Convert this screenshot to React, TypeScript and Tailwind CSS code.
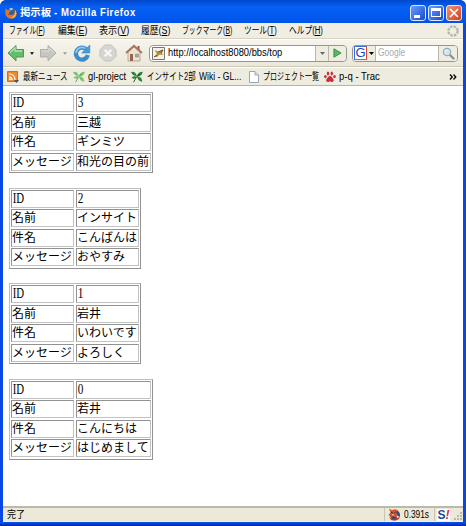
import { useLayoutEffect, useRef, type ReactNode } from 'react';

const ui = "font-['Liberation_Sans','Noto_Sans_CJK_JP',sans-serif]";

/* Text condensed or stretched to the width of its box. */
function Fit({ className, children }: { className: string; children: ReactNode }) {
  const box = useRef<HTMLSpanElement>(null);
  const inner = useRef<HTMLSpanElement>(null);
  useLayoutEffect(() => {
    const fit = () => {
      if (box.current && inner.current) {
        inner.current.style.transform = `scaleX(${box.current.clientWidth / inner.current.offsetWidth})`;
      }
    };
    fit();
    document.fonts.ready.then(fit);
  }, []);
  return (
    <span ref={box} className={`block shrink-0 whitespace-nowrap ${className}`}>
      <span ref={inner} className="inline-block origin-left">{children}</span>
    </span>
  );
}

function Fox({ className }: { className: string }) {
  return (
    <svg viewBox="0 0 12 12" className={`shrink-0 ${className}`}>
      <circle cx="6.2" cy="5.7" r="5" fill="#2b5fa8" />
      <path d="M4 1.8Q6 .3 8 1.3L7.4 3 5.5 3.6Z" fill="#a8d0ef" />
      <path d="M.4 1.2 2.1 3 4.4 3.2 5.5 4.7 4 5.4Q4 8 6.6 8 9.5 7.8 9.7 4.5L9 2.2Q12 4 11.8 7 11 11.5 6.5 11.8 1.6 11.8.4 7Z" fill="#e8781b" />
      <path d="M10.4 3.5Q12.2 6.5 9.7 9.7 7.8 11.2 5.5 10.5 9.5 10 10.2 6.4Z" fill="#ffd04a" />
      <path d="M1 5 3 7 5 6.4 3.9 8.3Z" fill="#b83e10" />
    </svg>
  );
}

/* Status bar badge: a red-brown fox over a blue disc. */
function StatusFox() {
  return (
    <svg viewBox="0 0 13 13" className="h-[13px] w-[13px] shrink-0">
      <circle cx="7" cy="7" r="5" fill="#2c4c86" />
      <path d="M1 .5 4 2.2 6.5 1.2 10 2 8.3 4.4 9.8 7.3 8 9.5 5 8 3.2 9.5.5 7 2.6 4.5Z" fill="#d3542d" />
      <path d="M1 8.5Q4 12 8 10.6L11.5 7.5 11 11 7 12.8 3 12Z" fill="#b63a22" />
      <path d="m3.2 4.2 1.6.8M7.5 4 6.4 5" stroke="#2b1712" />
      <path d="m4 6.3 2 .2-1 1.6Z" fill="#fff1da" />
      <circle cx="9.7" cy="8.8" r="1.1" fill="#eef2f6" />
    </svg>
  );
}

function Arrow({ green }: { green?: boolean }) {
  return green ? (
    <svg viewBox="0 0 18 18" className="h-[18px] w-[18px] shrink-0">
      <path d="M1 9 9 1.5V5.5H16.5V13H9v3.8Z" fill="#65bd6c" stroke="#469b54" strokeWidth="1" />
      <path d="M3 8.6 8 4V7H15" fill="none" stroke="#b4e3b0" strokeWidth="1.3" />
    </svg>
  ) : (
    <svg viewBox="0 0 18 18" className="h-[18px] w-[18px] shrink-0">
      <path d="M17 9 9 1.5V5.5H1.5V13H9v3.8Z" fill="#c6c6c3" stroke="#aeaeac" strokeWidth="1" />
      <path d="M2.5 7H10V4l5 4.8" fill="none" stroke="#dededb" />
    </svg>
  );
}

function Down({ className }: { className: string }) {
  return (
    <svg viewBox="0 0 5 3" className={`h-[3px] shrink-0 ${className}`}>
      <path d="M0 0h5L2.5 3Z" fill="currentColor" />
    </svg>
  );
}

function Leaf({ dark, className }: { dark?: boolean; className: string }) {
  return (
    <svg viewBox="0 0 12 12" className={`h-3 w-3 shrink-0 ${className}`}>
      <g fill={dark ? '#28843a' : '#77c66b'}>
        <path d="M0 1Q4-.5 6 5 2 5.5 0 1Z" />
        <path d="M6 5.5Q6.5.8 11.8.8 11 5.5 6 5.5Z" />
        <path d="M5.8 5.8Q3 4.5.6 6.6 3.4 9.3 5.8 5.8Z" />
        <path d="M6 5.5Q11 5.5 11.3 10.8 7 10.5 6 5.5Z" />
      </g>
      <path d="M2.5 11.2 5.8 5.5 9 3" fill="none" stroke={dark ? '#174e24' : '#4da357'} strokeWidth=".9" />
    </svg>
  );
}

const menus: [string, string, string][] = [
  ['ファイル', 'F', 'ml-1.5 w-9'],
  ['編集', 'E', 'ml-[13px] w-[29px]'],
  ['表示', 'V', 'ml-3 w-[30px]'],
  ['履歴', 'S', 'ml-3 w-[29px]'],
  ['ブックマーク', 'B', 'ml-3 w-[50px]'],
  ['ツール', 'T', 'ml-3 w-[33px]'],
  ['ヘルプ', 'H', 'ml-3 w-[34px]'],
];

type Post = { id: string; name: string; title: string; message: string; wide: boolean };
const posts: Post[] = [
  { id: '3', name: '三越', title: 'ギンミツ', message: '和光の目の前', wide: true },
  { id: '2', name: 'インサイト', title: 'こんばんは', message: 'おやすみ', wide: false },
  { id: '1', name: '岩井', title: 'いわいです', message: 'よろしく', wide: false },
  { id: '0', name: '若井', title: 'こんにちは', message: 'はじめまして', wide: true },
];

function Cell({ children, latin }: { children: string; latin?: boolean }) {
  return (
    <div className="h-[18px] overflow-hidden border border-t-[#929292] border-l-[#929292] border-r-[#c2c2c2] border-b-[#c2c2c2] text-[12px] leading-4 whitespace-nowrap">
      {latin ? (
        <span className={`block origin-left pl-px font-['Liberation_Serif',serif] text-[15px] leading-[15px] ${children === 'ID' ? 'scale-x-[.72]' : 'scale-x-[.75]'}`}>{children}</span>
      ) : children}
    </div>
  );
}

function PostTable({ post }: { post: Post }) {
  return (
    <div className={`grid h-[81px] gap-x-0.5 gap-y-[1.5px] border border-t-[#bdbdbd] border-l-[#bdbdbd] border-r-[#929292] border-b-[#929292] p-px ${post.wide ? 'w-36 grid-cols-[63px_75px]' : 'w-[132px] grid-cols-[63px_63px]'}`}>
      <Cell latin>ID</Cell><Cell latin>{post.id}</Cell>
      <Cell>名前</Cell><Cell>{post.name}</Cell>
      <Cell>件名</Cell><Cell>{post.title}</Cell>
      <Cell>メッセージ</Cell><Cell>{post.message}</Cell>
    </div>
  );
}

export default function App() {
  return (
    <div className={`flex h-[526px] w-[466px] flex-col overflow-hidden rounded-t-md bg-[#0847e6] text-black ${ui}`}>
      <header className="flex h-[23px] shrink-0 items-center rounded-t-md bg-linear-to-b from-[#0047c9] via-[#0860f5] via-30% to-[#0053e8] pt-0.5 pl-[5px]">
        <Fox className="h-3 w-3" />
        <Fit className="ml-[3px] w-[31px] text-[10px] leading-4 font-bold text-white">掲示板</Fit>
        <Fit className="ml-[3px] w-[82px] text-[10px] leading-4 font-bold text-white"><span className="tracking-[.6px]">- Mozilla Firefox</span></Fit>
        <div className="ml-auto flex gap-[2px] pr-[4px]">
          <div className="flex h-4 w-4 items-end rounded-[3px] border border-[#dce8ff] bg-linear-to-br from-[#6c9bff] to-[#1749c9] pb-[2px] pl-[3px]"><i className="h-[3px] w-[6px] bg-white" /></div>
          <div className="flex h-4 w-4 items-center justify-center rounded-[3px] border border-[#dce8ff] bg-linear-to-br from-[#6c9bff] to-[#1749c9]"><i className="h-[9px] w-2.5 border border-t-[3px] border-white" /></div>
          <div className="flex h-4 w-4 items-center justify-center rounded-[3px] border border-[#ffe5dd] bg-linear-to-br from-[#f29272] to-[#d13a12]"><svg viewBox="0 0 10 10" className="h-2.5 w-2.5"><path d="m1 1 8 8M9 1 1 9" stroke="#fff" strokeWidth="1.7" /></svg></div>
        </div>
      </header>

      <div className="mr-[3px] ml-[3px] flex min-h-0 flex-1 flex-col bg-[#efede0]">
        <nav className="flex h-4 shrink-0 items-center border-b border-[#d5d2c3] bg-[#f0eee3] text-[10px] leading-3">
          {menus.map(([label, key, size]) => (
            <Fit key={key} className={size}>{label}(<span className="underline underline-offset-1">{key}</span>)</Fit>
          ))}
          <svg viewBox="0 0 12 12" className="mr-1 ml-auto h-3 w-3"><circle cx="6" cy="6" r="4.6" fill="none" stroke="#b5b5b5" strokeWidth="2.4" strokeDasharray="2.6 1.01" /></svg>
        </nav>

        <div className="flex h-7 shrink-0 items-center border-t border-b border-t-white border-b-[#ccc8b8] bg-linear-to-b from-[#f6f4ec] to-[#ebe8da] pl-1">
          <Arrow green />
          <Down className="ml-[5px] w-[4px]" />
          <span className="ml-[5px] flex"><Arrow /></span>
          <Down className="ml-[6px] w-[4px] text-[#999]" />
          <svg viewBox="0 0 18 18" className="ml-[6px] h-[18px] w-[18px] shrink-0">
            <path d="M13.2 5.4A6 6 0 1 0 14.8 11" fill="none" stroke="#3d8dcc" strokeWidth="4.3" />
            <path d="M12.5 4.6A6 6 0 0 0 3 9" fill="none" stroke="#8dcaee" strokeWidth="1.7" />
            <path d="M16.8 1v8H8.7Z" fill="#4c9dd7" stroke="#3480bd" strokeWidth=".6" />
          </svg>
          <svg viewBox="0 0 18 18" className="ml-2 h-[18px] w-[18px] shrink-0">
            <path d="M5.8 1h6.4L17 5.8v6.4L12.2 17H5.8L1 12.2V5.8Z" fill="#d6d5d1" stroke="#c2c1bd" /><path d="m5.7 5.7 6.6 6.6m0-6.6-6.6 6.6" stroke="#f8f7f3" strokeWidth="2.2" />
          </svg>
          <svg viewBox="0 0 18 18" className="ml-2 h-[18px] w-[18px] shrink-0">
            <path d="M12.5 2h2v4h-2Z" fill="#a25443" /><path d="M3 8 9 3l6 5v9H3Z" fill="#eee2d1" stroke="#a68d7e" strokeWidth=".7" />
            <path d="m1 9 8-7.3L17 9" fill="none" stroke="#a87461" strokeWidth="1.9" /><path d="M5 10h3v7H5Z" fill="#97654e" /><path d="M10.5 10h3v3h-3Z" fill="#8cafc5" stroke="#927b6e" strokeWidth=".5" />
          </svg>
          <div className="ml-[6px] flex h-[17px] w-[198px] shrink-0 items-center rounded-sm border border-[#96978f] bg-white">
            <svg viewBox="0 0 13 13" className="ml-[2px] h-[13px] w-[13px] shrink-0"><path d="M.5.5h12v12H.5Z" fill="#f4f2e7" stroke="#77776f" /><path d="M2 10 5 7 2.5 3 7 5 11 2.5 10 6 11 8 7.5 7.5 5 10Z" fill="#b58a39" /><path d="m6 5 5-2-2 3M2 10l3-2" fill="none" stroke="#65553b" /></svg>
            <Fit className="ml-[3px] w-[114px] text-[10px] leading-3">http://localhost8080/bbs/top</Fit>
            <span className="ml-auto flex h-full w-[13px] items-center justify-center border-l border-[#b8b7ab] bg-[#efede0]"><Down className="w-[5px] text-[#666]" /></span>
            <span className="flex h-full w-[18px] items-center justify-center rounded-r-sm border-l border-[#b8b7ab] bg-[#efede0]"><svg viewBox="0 0 10 11" className="h-2.5 w-[9px]"><path d="m1 .8 8 4.7-8 4.7Z" fill="#58b95f" stroke="#358e44" /></svg></span>
          </div>
          <div className="ml-[5px] flex h-[17px] w-[106px] shrink-0 items-center overflow-hidden rounded-sm border border-[#96978f] bg-white">
            <div className="flex h-full w-[23px] items-center border-r border-[#b8b7ab] bg-[#efede0] pl-px">
              <span className="flex h-[14px] w-[13px] items-center justify-center border border-t-[#3c6fd8] border-r-[#dc4338] border-b-[#49a553] border-l-[#3c6fd8] bg-white text-[13px] leading-3 text-[#1747ba]">G</span><Down className="ml-[2px] w-[5px]" />
            </div>
            <Fit className="ml-[2px] w-[27px] text-[10px] leading-3 text-[#aaa]">Google</Fit>
            <span className="ml-auto flex h-full w-[19px] items-center justify-center border-l border-[#b8b7ab] bg-[#efede0]"><svg viewBox="0 0 13 13" className="h-[13px] w-[13px]"><path d="m7.5 7.5 4 4" stroke="#8d8e8b" strokeWidth="2.2" strokeLinecap="round" /><circle cx="5" cy="5" r="3.7" fill="#cce7f5" stroke="#91acba" strokeWidth="1.2" /><path d="M3 4.5Q3.5 3 5 3" fill="none" stroke="#fff" /></svg></span>
          </div>
        </div>

        <div className="flex h-[19px] shrink-0 items-center border-t border-b border-t-white border-b-[#b7b4a5] bg-[#eeecdf] pl-1 text-[10px] leading-3">
          <svg viewBox="0 0 12 12" className="h-3 w-3 shrink-0"><path d="M.5.5h10v10H.5Z" fill="#f0892b" stroke="#c97128" /><path d="M2 3q6 0 6 6M2 5.8Q5 6 5.2 9" fill="none" stroke="#fff" strokeWidth="1.2" /><circle cx="2.9" cy="8.2" r="1" fill="#fff" /><path d="M7 9h5l-2.5 3Z" fill="#4c5360" /></svg>
          <Fit className="ml-1 w-[45px]">最新ニュース</Fit>
          <Leaf className="ml-[5px]" />
          <Fit className="ml-[3px] w-[38px]">gl-project</Fit>
          <Leaf dark className="ml-[5px]" />
          <Fit className="ml-1 w-[49px]">インサイト2部</Fit>
          <Fit className="ml-[3px] w-[42px]">Wiki - GL...</Fit>
          <svg viewBox="0 0 10 12" className="ml-2 h-3 w-2.5 shrink-0"><path d="M.5.5H6L9.5 4v7.5h-9Z" fill="#fff" stroke="#9ba7b5" /><path d="M6 .5V4h3.5" fill="#d6e0ec" stroke="#9ba7b5" /></svg>
          <Fit className="ml-1 w-14">プロジェクト一覧</Fit>
          <svg viewBox="0 0 12 12" className="ml-[5px] h-3 w-3 shrink-0"><g fill="#c82e39"><ellipse cx="4" cy="2.4" rx="1.2" ry="2" /><ellipse cx="7.8" cy="2.4" rx="1.2" ry="2" /><ellipse cx="1.4" cy="5.6" rx="1.3" ry="1.6" /><ellipse cx="10.5" cy="5.6" rx="1.3" ry="1.6" /><path d="M6 4.8Q8 5.2 9.8 9 9.6 11.8 7 10.7L6 10.2 5 10.7Q2.4 11.8 2 9 4 5.2 6 4.8Z" /></g></svg>
          <Fit className="ml-[3px] w-[41px]">p-q - Trac</Fit>
          <svg viewBox="0 0 8 6" className="mr-[6px] ml-auto h-[6px] w-2"><path d="m1 .5 2.3 2.5L1 5.5M4.5.5 6.8 3 4.5 5.5" fill="none" stroke="#000" strokeWidth="1.3" /></svg>
        </div>

        <main className="flex min-h-0 flex-1 flex-col gap-[14.5px] bg-white pt-[6px] pl-[6px] font-['Liberation_Serif','Noto_Sans_CJK_JP',sans-serif]">
          {posts.map((post) => <PostTable key={post.id} post={post} />)}
        </main>

        <footer className="flex h-4 shrink-0 items-center border-t-2 border-b border-t-[#bbb9ac] border-b-[#fff0c9] bg-[#ece9d8] pl-1 text-[10px] leading-3">
          <Fit className="w-[18px]">完了</Fit>
          <div className="ml-auto flex h-full items-center border-l border-[#c8c5b5] pl-[3px]">
            <StatusFox />
            <Fit className="ml-[3px] w-[25px]">0.391s</Fit>
          </div>
          <div className="ml-[5px] flex h-full items-center border-l border-[#c8c5b5] pl-[2px]">
            <span className="flex h-3 w-[13px] items-center justify-center bg-white text-[12px] leading-3 font-bold text-[#164a9c]"><span>S</span><i className="text-[#df2634]">!</i></span>
          </div>
          <svg viewBox="0 0 9 9" className="mt-1 ml-[4px] h-[9px] w-[9px]"><path d="M6 0h2v2H6ZM3 3h2v2H3ZM6 3h2v2H6ZM0 6h2v2H0ZM3 6h2v2H3ZM6 6h2v2H6Z" fill="#bbb8a8" /></svg>
        </footer>
      </div>
      <div className="h-1 shrink-0 bg-linear-to-b from-[#0855ed] to-[#0029a9]" />
    </div>
  );
}
